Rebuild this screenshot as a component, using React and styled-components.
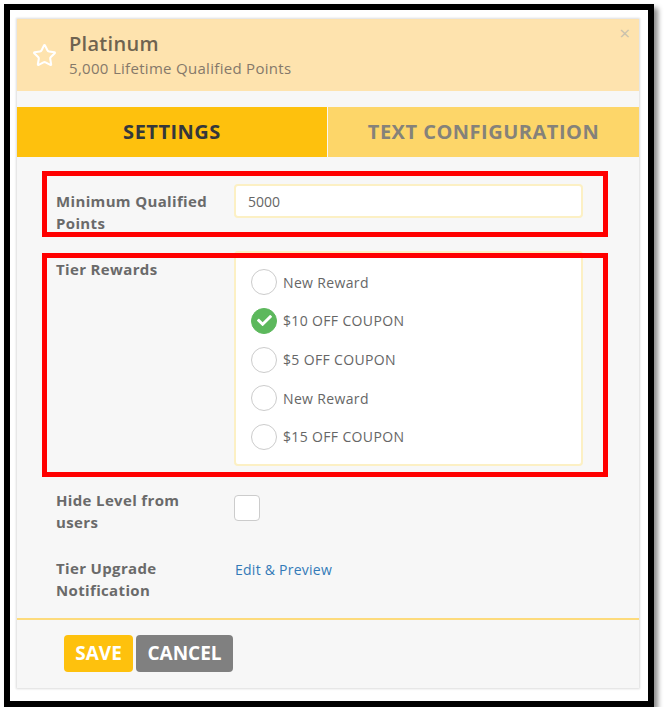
import React from "react";
import styled, { createGlobalStyle } from "styled-components";
import { Star } from "lucide-react";
import { FaCheck } from "react-icons/fa";

const GlobalStyle = createGlobalStyle`
    body {
        margin: 0;
        background: #fff;
        font-family: "Open Sans", "Liberation Sans", sans-serif;
    }
`;

const Frame = styled.div`
    position: relative;
    box-sizing: border-box;
    width: 650px;
    height: 703px;
    margin: 4px 0 0 4px;
    padding: 9px 9px 0 7px;
    border: 6px solid #000;
    background: #fff;
    box-shadow: 4px 4px 5px rgba(0, 0, 0, 0.45);
`;

const Card = styled.div`
    box-sizing: border-box;
    height: 669px;
    background: #f7f7f7;
    box-shadow: 0 0 2px 1px rgba(0, 0, 0, 0.14);
    display: flex;
    flex-direction: column;
`;

const Header = styled.div`
    position: relative;
    height: 72px;
    flex: none;
    background: #fee3ae;
    display: flex;
    align-items: center;
    gap: 12px;
    padding-left: 15px;
`;

const HeaderText = styled.div`
    display: flex;
    flex-direction: column;
    gap: 2px;
`;

const Title = styled.div`
    font-size: 20px;
    line-height: 24px;
    font-weight: 600;
    letter-spacing: 0.3px;
    color: #6f6350;
`;

const Subtitle = styled.div`
    font-size: 15px;
    line-height: 20px;
    letter-spacing: 0.3px;
    color: #85796a;
`;

const Close = styled.span`
    position: absolute;
    top: 3px;
    right: 9px;
    font-size: 19px;
    line-height: 22px;
    color: #c9c1ad;
`;

const Tabs = styled.div`
    display: flex;
    height: 50px;
    flex: none;
    margin-top: 16px;
`;

const Tab = styled.div`
    flex: ${(p) => (p.$active ? "0 0 310px" : "1")};
    margin-left: ${(p) => (p.$active ? "0" : "1px")};
    padding-bottom: 2px;
    display: flex;
    align-items: center;
    justify-content: center;
    background: ${(p) => (p.$active ? "#fec10d" : "#fdd669")};
    color: ${(p) => (p.$active ? "#34373b" : "#85827a")};
    font-size: 20px;
    font-weight: 700;
    letter-spacing: 0.5px;
`;

const Form = styled.div`
    flex: 1;
    padding: 27px 56px 0 39px;
    display: flex;
    flex-direction: column;
`;

const Row = styled.div`
    display: grid;
    grid-template-columns: 178px 1fr;
    margin-bottom: ${(p) => p.$gap || 0}px;
`;

const Label = styled.div`
    box-sizing: border-box;
    width: 160px;
    font-size: 15px;
    line-height: 22px;
    font-weight: 700;
    letter-spacing: 0.35px;
    color: #6a6a6a;
    padding-top: ${(p) => p.$top || 0}px;
`;

const TextInput = styled.div`
    box-sizing: border-box;
    height: 34px;
    padding-left: 12px;
    display: flex;
    align-items: center;
    background: #fff;
    border: 2px solid #fcf0c4;
    border-radius: 4px;
    font-size: 14px;
    color: #666;
`;

const RewardBox = styled.div`
    box-sizing: border-box;
    height: 215px;
    padding: 16.4px 15px 0;
    background: #fff;
    border: 2px solid #fcf0c4;
    border-radius: 4px;
    display: flex;
    flex-direction: column;
    gap: 12.6px;
`;

const Reward = styled.div`
    display: flex;
    align-items: center;
    gap: 6px;
    height: 26px;
    font-size: 14px;
    letter-spacing: 0.35px;
    color: #666;
`;

const Radio = styled.span`
    box-sizing: border-box;
    width: 26px;
    height: 26px;
    border-radius: 50%;
    border: 1px solid ${(p) => (p.$checked ? "#5cb85c" : "#ccc")};
    background: ${(p) => (p.$checked ? "#5cb85c" : "#fff")};
    display: flex;
    align-items: center;
    justify-content: center;
    color: #fff;
`;

const CheckBox = styled.span`
    display: block;
    box-sizing: border-box;
    width: 26px;
    height: 26px;
    margin-top: 6px;
    background: #fff;
    border: 1px solid #ccc;
    border-radius: 4px;
`;

const Link = styled.a`
    display: block;
    margin: 3.5px 0 0 1px;
    font-size: 14px;
    line-height: 20px;
    color: #337ab7;
    letter-spacing: 0.25px;
`;

const Footer = styled.div`
    box-sizing: border-box;
    height: 70px;
    flex: none;
    border-top: 2px solid #fddb7c;
    padding: 15px 0 0 47px;
    display: flex;
    gap: 3px;
    align-items: flex-start;
`;

const Button = styled.button`
    height: 37px;
    width: ${(p) => p.$width}px;
    padding: 0 0 2px;
    border: none;
    border-radius: 4px;
    background: ${(p) => p.$bg};
    color: #fff;
    font-family: inherit;
    font-size: 19px;
    font-weight: 700;
`;

// red annotation rectangles drawn on top of the screenshot
const Highlight = styled.div`
    position: absolute;
    box-sizing: border-box;
    left: 32px;
    top: ${(p) => p.$top}px;
    width: 566px;
    height: ${(p) => p.$height}px;
    border: 5px solid #f00;
`;

const rewards = [
    { name: "New Reward" },
    { name: "$10 OFF COUPON", checked: true },
    { name: "$5 OFF COUPON" },
    { name: "New Reward" },
    { name: "$15 OFF COUPON" },
];

const App = () => {
    return (
        <Frame>
            <GlobalStyle />
            <Card>
                <Header>
                    <Star size={25} color="#fff" strokeWidth={2} />
                    <HeaderText>
                        <Title>Platinum</Title>
                        <Subtitle>5,000 Lifetime Qualified Points</Subtitle>
                    </HeaderText>
                    <Close>×</Close>
                </Header>
                <Tabs>
                    <Tab $active>SETTINGS</Tab>
                    <Tab>TEXT CONFIGURATION</Tab>
                </Tabs>
                <Form>
                    <Row $gap={17}>
                        <Label $top={6}>Minimum Qualified Points</Label>
                        <TextInput>5000</TextInput>
                    </Row>
                    <Row $gap={23}>
                        <Label $top={7}>Tier Rewards</Label>
                        <RewardBox>
                            {rewards.map((r, i) => (
                                <Reward key={i}>
                                    <Radio $checked={r.checked}>
                                        {r.checked && <FaCheck size={15} />}
                                    </Radio>
                                    {r.name}
                                </Reward>
                            ))}
                        </RewardBox>
                    </Row>
                    <Row $gap={23.5}>
                        <Label>Hide Level from users</Label>
                        <div>
                            <CheckBox />
                        </div>
                    </Row>
                    <Row>
                        <Label>Tier Upgrade Notification</Label>
                        <div>
                            <Link>Edit &amp; Preview</Link>
                        </div>
                    </Row>
                </Form>
                <Footer>
                    <Button $bg="#fec10d" $width={69}>SAVE</Button>
                    <Button $bg="#808080" $width={97}>CANCEL</Button>
                </Footer>
            </Card>
            <Highlight $top={161} $height={66} />
            <Highlight $top={243} $height={224} />
        </Frame>
    );
};

export default App;
